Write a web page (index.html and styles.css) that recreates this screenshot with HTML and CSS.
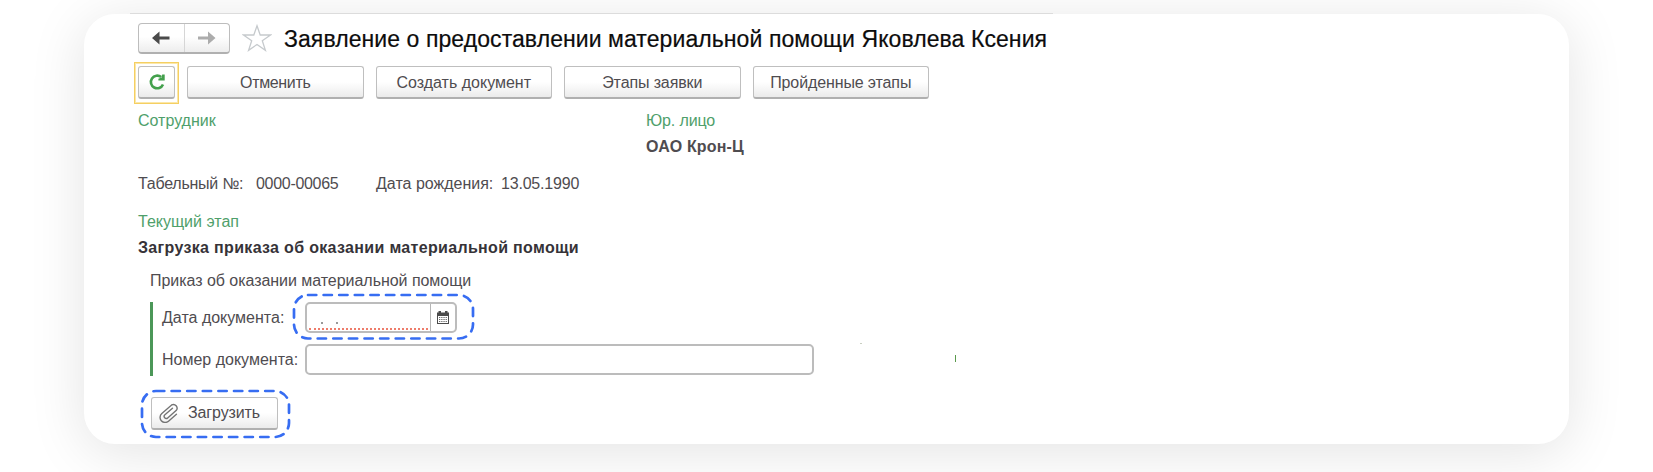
FILE: index.html
```
<!DOCTYPE html>
<html lang="ru">
<head>
<meta charset="utf-8">
<title>Заявление о предоставлении материальной помощи</title>
<link rel="stylesheet" href="styles.css">
</head>
<body>
<main class="card">
  <header class="head">
    <div class="nav">
      <button class="nav-btn" aria-label="Назад"><svg width="18" height="14" viewBox="0 0 18 14"><path d="M0 7L7.5 0.5V5.5H17.5V8.5H7.5V13.5Z" fill="#4a4a4a"/></svg></button>
      <button class="nav-btn" aria-label="Вперёд"><svg width="18" height="14" viewBox="0 0 18 14"><path d="M17.5 7L10 0.5V5.5H0V8.5H10V13.5Z" fill="#acacac"/></svg></button>
    </div>
    <svg class="star" width="30" height="28" viewBox="0 0 30 28"><path d="M15 1.8L18.2 11H28.5L20.3 16.8L23.4 26.3L15 20.5L6.6 26.3L9.7 16.8L1.5 11H11.8Z" fill="#fff" stroke="#c6cacd" stroke-width="1.3"/></svg>
    <h1 class="title">Заявление о предоставлении материальной помощи Яковлева Ксения</h1>
  </header>

  <div class="toolbar">
    <div class="focus"><button class="btn refresh" aria-label="Обновить"><svg width="18" height="18" viewBox="0 0 18 18"><path d="M15 11.4A6.3 6.3 0 1 1 13.2 4.1" fill="none" stroke="#43a04c" stroke-width="2.6"/><path d="M16.7 1.6V7.4H10.4V5.8L13.6 4.6L14.2 1.6Z" fill="#43a04c"/></svg></button></div>
    <button class="btn cancel">Отменить</button>
    <button class="btn">Создать документ</button>
    <button class="btn stages">Этапы заявки</button>
    <button class="btn stages">Пройденные этапы</button>
  </div>

  <div class="people">
    <div class="label">Сотрудник</div>
    <div><div class="label firm">Юр. лицо</div><div class="company">ОАО Крон-Ц</div></div>
  </div>

  <div class="facts"><span class="tab">Табельный №:</span><span class="tab-no">0000-00065</span><span class="birth">Дата рождения:</span><span class="date">13.05.1990</span></div>

  <div class="label stage-label">Текущий этап</div>
  <div class="stage">Загрузка приказа об оказании материальной помощи</div>
  <div class="group-title">Приказ об оказании материальной помощи</div>

  <div class="group">
    <div class="row">
      <span class="name">Дата документа:</span>
      <div class="marked">
        <div class="date-field">
          <div class="mask"><span class="dots"><i></i><i></i></span></div>
          <div class="pick"><svg width="12" height="13" viewBox="0 0 12 13"><path d="M0 1.5H1.5V0H4V1.5H8V0H10.5V1.5H12V13H0Z" fill="#4b4b4b"/><path d="M1 5H11V12H1Z" fill="#fff"/><path d="M2 6.5H10M2 8.5H10M2 10.5H10" stroke="#6c6c6c" stroke-width="1.1" stroke-dasharray="1.3 .9"/></svg></div>
        </div>
        <svg class="outline date-outline" width="184" height="48" viewBox="0 0 184 48"><rect x="2" y="2" width="179" height="43.5" rx="14"/></svg>
      </div>
    </div>
    <div class="row">
      <span class="name">Номер документа:</span>
      <div class="number-field"></div>
    </div>
  </div>

  <div class="marked upload-wrap">
    <button class="btn upload"><svg width="22" height="20" viewBox="0 0 22 20"><g transform="rotate(-41 11 10)" fill="none" stroke="#747474" stroke-width="1.4" stroke-linecap="round"><path d="M16 8H6A2.1 2.1 0 0 0 6 12.2H17.5A3.7 3.7 0 0 0 17.5 5H4.5A5.1 5.1 0 0 0 4.5 15.2H15"/></g></svg><span>Загрузить</span></button>
    <svg class="outline upload-outline" width="152" height="50" viewBox="0 0 152 50"><rect x="2" y="2" width="147" height="46" rx="14"/></svg>
  </div>
  <i class="speck grey"></i><i class="speck green"></i>
</main>
</body>
</html>
```
FILE: styles.css
```
* { box-sizing: border-box; }
body {
  margin: 0;
  height: 472px;
  overflow: hidden;
  padding: 14px 84px 28px;
  background: #fff;
  font: 16px/18px "Liberation Sans", Arial, sans-serif;
  color: #4f4c50;
}
.card {
  position: relative;
  width: 1485px;
  height: 430px;
  padding: 9px 54px 0;
  border-radius: 31px;
  background: #fff;
  box-shadow: 0 8px 56px rgba(0, 0, 0, 0.115);
}
.card::before {
  content: "";
  position: absolute;
  left: 46px;
  top: -1px;
  width: 923px;
  height: 1px;
  background: #dcdcdc;
}
button { font: inherit; color: inherit; padding: 0; }
.head { display: flex; height: 31px; }
.nav {
  display: flex;
  width: 92px;
  height: 31px;
  border: 1px solid #bdbdbd;
  border-bottom: 2px solid #b0b0b0;
  border-radius: 4px;
  background: linear-gradient(#fff 45%, #ededed);
}
.nav-btn {
  flex: 1;
  display: flex;
  align-items: center;
  justify-content: center;
  border: 0;
  background: none;
}
.nav-btn + .nav-btn { border-left: 1px solid #d6d6d6; }
.star { margin: 1px 0 0 12px; }
.title {
  margin: 2px 0 0 12px;
  font-size: 23px;
  line-height: 28px;
  font-weight: 400;
  letter-spacing: 0.08px;
  color: #0c0c0c;
  -webkit-text-stroke: 0.2px #0c0c0c;
  white-space: nowrap;
}
.toolbar { display: flex; gap: 12px; height: 42px; margin: 7px 0 0 -4px; }
.focus { width: 45px; height: 42px; padding: 3px 3px 0; border: 1px solid #f5cf62; box-shadow: inset 0 0 0 1px #fbe7a9; margin-right: -4px; }
.btn {
  display: flex;
  align-items: center;
  justify-content: center;
  width: 176.5px;
  height: 33px;
  margin-top: 4px;
  border: 1px solid #bfbfbf;
  border-bottom: 2px solid #b0b0b0;
  border-radius: 3px;
  padding-top: 2px;
  background: linear-gradient(#fff 50%, #ebebeb);
  white-space: nowrap;
}
.focus .btn { width: 37px; margin-top: 0; padding-top: 0; }
.toolbar { margin-top: 7.5px; }
.cancel { letter-spacing: -0.35px; }
.stages { letter-spacing: -0.12px; }
.people { display: grid; grid-template-columns: 508px auto; margin-top: 8.5px; height: 62px; }
.label { color: #4f9f6b; }
.firm { letter-spacing: -0.13px; }
.company { margin-top: 8px; font-weight: 700; letter-spacing: 0.15px; }
.facts { display: flex; margin-top: 1px; }
.tab { width: 118px; letter-spacing: -0.25px; }
.tab-no { width: 120px; letter-spacing: -0.3px; }
.birth { width: 125px; }
.date { letter-spacing: -0.2px; }
.stage-label { margin-top: 20px; }
.stage { margin-top: 8px; font-weight: 700; letter-spacing: 0.324px; color: #363338; }
.group-title { margin: 15px 0 0 12px; letter-spacing: -0.04px; }
.group {
  display: flex;
  flex-direction: column;
  gap: 11px;
  width: 700px;
  height: 74px;
  margin: 12px 0 0 12px;
  padding-left: 9px;
  border-left: 3px solid #4b9758;
}
.row { display: flex; height: 31px; align-items: center; }
.name { width: 143px; }
.marked { position: relative; }
.date-field { display: flex; width: 152px; height: 31px; border: 2px solid #bcbcbc; border-radius: 5px; }
.mask { width: 124px; padding: 0 2px; border-right: 1px solid #b5b5b5; }
.dots {
  display: flex;
  gap: 13px;
  height: 26px;
  padding: 18px 0 0 12px;
  border-bottom: 2px dotted #ee7c6b;
}
.dots i { width: 2px; height: 2px; background: #999; }
.pick { flex: 1; display: flex; align-items: center; justify-content: center; }
.number-field { width: 509px; height: 31px; border: 2px solid #bcbcbc; border-radius: 5px; }
.outline { position: absolute; pointer-events: none; }
.outline rect { fill: none; stroke: #376df2; stroke-width: 2.7; stroke-linecap: round; stroke-dasharray: 8.3 7.3; }
.date-outline { left: -13px; top: -9px; }
.upload-wrap { width: 127px; height: 33px; margin: 21px 0 0 13px; }
.upload { width: 127px; margin: 0; padding-top: 0; justify-content: flex-start; padding-left: 7px; gap: 7px; letter-spacing: -0.12px; }
.upload-outline { left: -11px; top: -8px; }
.speck { position: absolute; }
.grey { left: 776px; top: 329px; width: 2px; height: 1px; background: #c9cfc2; }
.green { left: 871px; top: 341px; width: 1px; height: 7px; background: #5a9a4c; }
```
